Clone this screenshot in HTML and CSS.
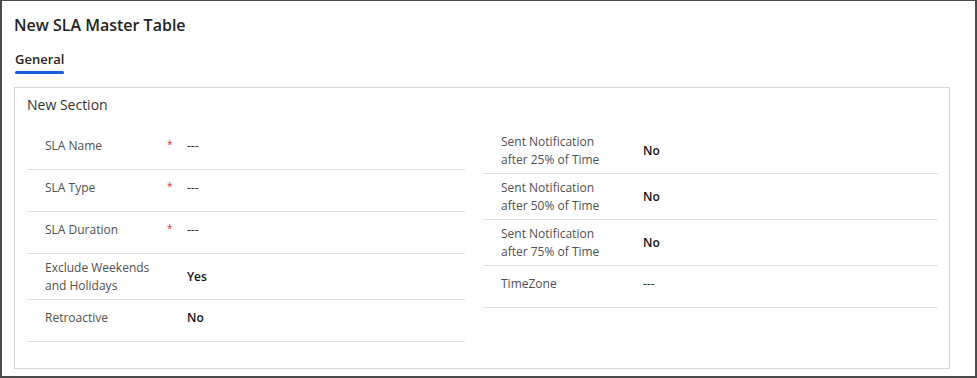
FILE: index.html
```html
<!DOCTYPE html>
<html lang="en">
<head>
  <meta charset="UTF-8" />
  <title>New SLA Master Table</title>
  <link rel="stylesheet" href="styles.css">
</head>
<body>

  <div class="form">
    <h1 class="form-title">New SLA Master Table</h1>

    <div class="tabs">
      <span class="tab active">General</span>
    </div>

    <section class="section">
      <h2 class="section-title">New Section</h2>

      <div class="columns">
        <!-- Left column -->
        <div class="column">
          <div class="field">
            <div class="field-body">
              <div class="field-label"><span class="label-text">SLA Name</span><span class="required">*</span></div>
              <div class="field-value">---</div>
            </div>
          </div>
          <div class="field">
            <div class="field-body">
              <div class="field-label"><span class="label-text">SLA Type</span><span class="required">*</span></div>
              <div class="field-value">---</div>
            </div>
          </div>
          <div class="field">
            <div class="field-body">
              <div class="field-label"><span class="label-text">SLA Duration</span><span class="required">*</span></div>
              <div class="field-value">---</div>
            </div>
          </div>
          <div class="field">
            <div class="field-body">
              <div class="field-label"><span class="label-text">Exclude Weekends and Holidays</span></div>
              <div class="field-value strong">Yes</div>
            </div>
          </div>
          <div class="field">
            <div class="field-body">
              <div class="field-label"><span class="label-text">Retroactive</span></div>
              <div class="field-value strong">No</div>
            </div>
          </div>
        </div>

        <!-- Right column -->
        <div class="column">
          <div class="field">
            <div class="field-body">
              <div class="field-label"><span class="label-text">Sent Notification after 25% of Time</span></div>
              <div class="field-value strong">No</div>
            </div>
          </div>
          <div class="field">
            <div class="field-body">
              <div class="field-label"><span class="label-text">Sent Notification after 50% of Time</span></div>
              <div class="field-value strong">No</div>
            </div>
          </div>
          <div class="field">
            <div class="field-body">
              <div class="field-label"><span class="label-text">Sent Notification after 75% of Time</span></div>
              <div class="field-value strong">No</div>
            </div>
          </div>
          <div class="field">
            <div class="field-body">
              <div class="field-label"><span class="label-text">TimeZone</span></div>
              <div class="field-value">---</div>
            </div>
          </div>
        </div>
      </div>
    </section>
  </div>

</body>
</html>
```

FILE: styles.css
```css
/* Base */
body {
  margin: 0;
  font-family: 'Open Sans', 'Noto Sans', sans-serif;
  background: #fff;
  color: #242424;
}

.form {
  box-sizing: border-box;
  width: 977px;
  height: 378px;
  border: 2px solid #4a4a4a;
  border-top-width: 1px;
  padding: 12px 25px 0 12px;
}

.form-title {
  margin: 0;
  font-size: 16px;
  font-weight: 600;
  line-height: 24px;
  color: #242424;
}

/* Tabs */
.tabs {
  display: flex;
  margin-top: 12px;
}

.tab {
  position: relative;
  font-size: 13px;
  font-weight: 600;
  line-height: 20px;
  padding: 0 0 5px 1px;
  color: #242424;
}

.tab.active::after {
  content: "";
  position: absolute;
  left: 1px;
  right: 0;
  bottom: 0;
  height: 3px;
  border-radius: 2px;
  background: #1b5fd8;
}

/* Section */
.section {
  margin-top: 13px;
  border: 1px solid #d6d6d6;
  padding: 7px 12px 26px;
}

.section-title {
  margin: 0;
  font-size: 14px;
  font-weight: 400;
  line-height: 20px;
  color: #333;
}

.columns {
  margin-top: 13px;
  display: grid;
  grid-template-columns: 438px 455px;
  gap: 18px;
  align-items: start;
}

/* Fields */
.field {
  box-sizing: border-box;
  min-height: 42px;
  padding: 5px 0 4px 18px;
  border-bottom: 1px solid #e0e0e0;
}

.field-body {
  display: flex;
  align-items: center;
  min-height: 26px;
}

.field-label {
  flex: none;
  width: 142px;
  display: flex;
  align-items: flex-start;
  font-size: 12px;
  line-height: 18px;
  color: #505050;
}

.label-text {
  width: 122px;
}

.required {
  font-size: 10px;
  line-height: 14px;
  color: #d13438;
}

.field-value {
  font-size: 12px;
  line-height: 18px;
  color: #242424;
}

.field-value.strong {
  font-weight: 600;
  color: #111;
}
```
